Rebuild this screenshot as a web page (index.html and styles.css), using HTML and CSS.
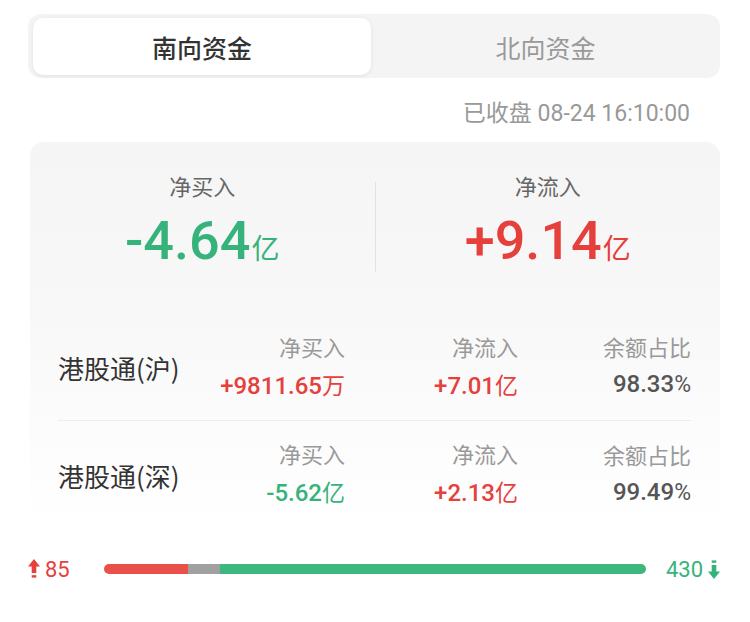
FILE: index.html
```html
<!DOCTYPE html>
<html lang="zh">
<head>
<meta charset="utf-8">
<link rel="stylesheet" href="styles.css">
</head>
<body>
<div class="page">
  <div class="tabs">
    <div class="tab active">南向资金</div>
    <div class="tab">北向资金</div>
  </div>
  <div class="stamp">已收盘 08-24 16:10:00</div>
  <div class="card">
    <div class="summary">
      <div class="sum-col">
        <div class="sum-label">净买入</div>
        <div class="sum-value green">-4.64<span class="unit">亿</span></div>
      </div>
      <div class="vdiv"></div>
      <div class="sum-col">
        <div class="sum-label">净流入</div>
        <div class="sum-value red">+9.14<span class="unit">亿</span></div>
      </div>
    </div>
    <div class="row">
      <div class="name">港股通(沪)</div>
      <div class="cell"><div class="lbl">净买入</div><div class="val red">+9811.65<span class="u">万</span></div></div>
      <div class="cell"><div class="lbl">净流入</div><div class="val red">+7.01<span class="u">亿</span></div></div>
      <div class="cell"><div class="lbl">余额占比</div><div class="val dark">98.33<span class="pct">%</span></div></div>
    </div>
    <div class="row second">
      <div class="name">港股通(深)</div>
      <div class="cell"><div class="lbl">净买入</div><div class="val green">-5.62<span class="u">亿</span></div></div>
      <div class="cell"><div class="lbl">净流入</div><div class="val red">+2.13<span class="u">亿</span></div></div>
      <div class="cell"><div class="lbl">余额占比</div><div class="val dark">99.49<span class="pct">%</span></div></div>
    </div>
  </div>
  <div class="breadth">
    <div class="side up">
      <svg class="arrow" width="12" height="20" viewBox="0 0 12 20"><path d="M6 0 L12 7.5 H8.3 V14 H3.7 V7.5 H0 Z" fill="#e5403c"/><rect x="3.7" y="16.2" width="4.6" height="2.4" fill="#e5403c"/></svg>
      <span>85</span>
    </div>
    <div class="bar">
      <div class="seg s-red" style="width:15.5%"></div>
      <div class="seg s-gray" style="width:5.9%"></div>
      <div class="seg s-green"></div>
    </div>
    <div class="side down">
      <span>430</span>
      <svg class="arrow" width="12" height="20" viewBox="0 0 12 20"><rect x="3.7" y="1.4" width="4.6" height="2.4" fill="#36b37b"/><path d="M6 20 L12 12.5 H8.3 V6 H3.7 V12.5 H0 Z" fill="#36b37b"/></svg>
    </div>
  </div>
</div>
</body>
</html>
```
FILE: styles.css
```css
* { box-sizing: border-box; }
html, body { margin: 0; padding: 0; background: #fff; }
body {
  font-family: "Noto Sans CJK SC", "Noto Sans", sans-serif;
  width: 750px;
  height: 622px;
  overflow: hidden;
}
.page { padding: 14px 30px 0 28px; }
.tabs {
  display: flex;
  background: #f4f4f4;
  border-radius: 13px;
  height: 64px;
  padding: 4px 0 3px 5px;
}
.tab {
  flex: 1;
  display: flex;
  align-items: center;
  justify-content: center;
  font-size: 25px;
  color: #999;
  border-radius: 10px;
}
.tab.active {
  flex: 0 0 338px;
  background: #fff;
  color: #333;
  font-weight: 500;
  box-shadow: 0 1px 4px rgba(0,0,0,0.08);
}
.stamp {
  text-align: right;
  font-family: Roboto, "Noto Sans CJK SC", sans-serif;
  font-size: 23px;
  color: #999;
  padding: 21px 30px 0 0;
  height: 64px;
  line-height: 30px;
}
.card {
  margin-left: 2px;
  border-radius: 14px;
  background: linear-gradient(#f5f5f5, #f8f8f8 45%, #ffffff 100%);
  padding: 26px 29px 0 28px;
  height: 384px;
}
.summary {
  display: flex;
  align-items: stretch;
  height: 136px;
  margin: 0 -29px 0 -28px;
}
.sum-col {
  flex: 1;
  display: flex;
  flex-direction: column;
  align-items: center;
}
.sum-label { font-size: 22px; color: #666; line-height: 34px; }
.sum-value {
  font-family: Roboto, sans-serif;
  font-weight: 500;
  font-size: 54px;
  line-height: 64px;
  margin-top: 7px;
}
.sum-value .unit {
  font-family: "Noto Sans CJK SC", sans-serif;
  font-weight: 400;
  font-size: 28px;
  margin-left: 1px;
}
.vdiv { width: 1px; background: #e2e2e2; margin: 14px 0 32px; }
.green { color: #36b37b; }
.red { color: #e5403c; }
.dark { color: #555; }
.row {
  display: grid;
  grid-template-columns: 114px 173px 173px 173px;
  align-items: center;
  height: 117px;
  padding-top: 11px;
  border-bottom: 1px solid #ededed;
}
.row.second { border-bottom: none; padding-top: 4px; height: 104px; }
.name { font-size: 26px; color: #333; white-space: nowrap; }
.cell { text-align: right; }
.lbl { font-size: 22px; color: #999; line-height: 34px; }
.val {
  font-family: Roboto, sans-serif;
  font-size: 24px;
  font-weight: 500;
  line-height: 42px;
}
.val .u { font-family: "Noto Sans CJK SC", sans-serif; font-weight: 400; font-size: 23px; }
.val .pct { font-family: Roboto, sans-serif; font-weight: 400; font-size: 23px; }
.breadth {
  display: flex;
  align-items: center;
  margin: 30px 0 0 -28px;
  padding-left: 28px;
  height: 26px;
}
.side {
  display: flex;
  align-items: center;
  gap: 5px;
  font-family: Roboto, sans-serif;
  font-size: 22px;
}
.side.up { color: #e5403c; width: 76px; }
.side.down { color: #36b37b; width: 74px; justify-content: flex-end; }
.bar {
  flex: 1;
  display: flex;
  height: 10px;
  border-radius: 5px;
  overflow: hidden;
}
.seg { height: 100%; }
.s-red { background: #e9504a; }
.s-gray { background: #a0a0a0; }
.s-green { flex: 1; background: #3cb87e; }
```
